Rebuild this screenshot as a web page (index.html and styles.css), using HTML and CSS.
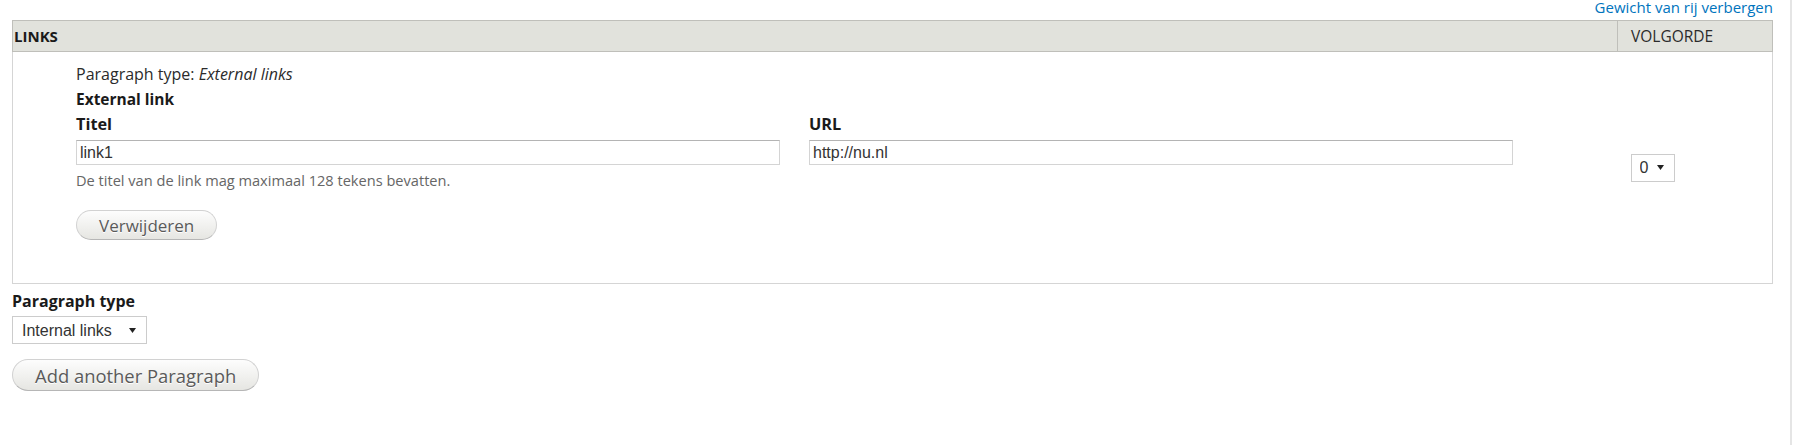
FILE: index.html
```html
<!DOCTYPE html>
<html lang="nl">
<head>
<meta charset="UTF-8">
<meta name="viewport" content="width=device-width, initial-scale=1.0">
<title>Links</title>
<link rel="stylesheet" href="styles.css">
</head>
<body>
<div class="page">
  <div class="table-tools">
    <a href="#" class="weight-toggle">Gewicht van rij verbergen</a>
  </div>
  <table class="field-table">
    <thead>
      <tr>
        <th class="field-label">Links</th>
        <th class="weight-col">Volgorde</th>
      </tr>
    </thead>
    <tbody>
      <tr>
        <td class="item">
          <div class="paragraph-type">Paragraph type: <em>External links</em></div>
          <div class="group-title">External link</div>
          <div class="link-fields">
            <div class="form-item">
              <label class="form-label" for="linkTitle">Titel</label>
              <input class="form-text" type="text" id="linkTitle" value="link1">
              <div class="description">De titel van de link mag maximaal 128 tekens bevatten.</div>
            </div>
            <div class="form-item">
              <label class="form-label" for="linkUrl">URL</label>
              <input class="form-text" type="text" id="linkUrl" value="http://nu.nl">
            </div>
          </div>
          <button class="button button-small" type="button">Verwijderen</button>
        </td>
        <td class="weight">
          <div class="select-box weight-select">
            <select id="weight">
              <option selected>0</option>
              <option>1</option>
            </select>
            <svg class="caret" width="7" height="5" viewBox="0 0 7 5"><path d="M0 0h7L3.5 5z"/></svg>
          </div>
        </td>
      </tr>
    </tbody>
  </table>

  <div class="add-more">
    <label class="form-label add-label" for="paragraphType">Paragraph type</label>
    <div class="select-box type-select">
      <select id="paragraphType">
        <option selected>Internal links</option>
        <option>External links</option>
      </select>
      <svg class="caret" width="7" height="5" viewBox="0 0 7 5"><path d="M0 0h7L3.5 5z"/></svg>
    </div>
    <button class="button button-add" type="button">Add another Paragraph</button>
  </div>
</div>
</body>
</html>
```

FILE: styles.css
```css
body {
  margin: 0;
  font-family: "Open Sans", Arial, sans-serif;
  color: #333;
  background: #fff;
}
.page {
  box-sizing: border-box;
  width: 1792px;
  min-height: 445px;
  padding: 0 17px 0 12px;
  border-right: 2px solid #e5e5e5;
}

/* tabledrag toggle */
.table-tools {
  height: 20px;
  text-align: right;
  font-size: 15px;
  line-height: 14px;
}
.weight-toggle {
  color: #0074bd;
  text-decoration: none;
}

.field-table {
  width: 100%;
  border-collapse: collapse;
}
.field-table th {
  padding: 5px 13px;
  line-height: 20px;
  font-size: 15.5px;
  font-weight: normal;
  text-align: left;
  text-transform: uppercase;
  color: #2b2b2b;
  background: #e1e2dc;
  border: 1px solid #bfbfba;
}
.field-table th.field-label {
  padding-left: 1px;
  font-size: 15px;
  font-weight: bold;
  color: #1a1a1a;
}
.field-table th.weight-col {
  width: 128px;
}
.field-table td {
  border: 1px solid #d5d5d5;
  vertical-align: middle;
}
.field-table td.item {
  padding: 10px 0 43px 63px;
  border-right: none;
  vertical-align: top;
}
.field-table td.weight {
  padding: 0 12px 0 13px;
  border-left: none;
}

.paragraph-type {
  font-size: 16px;
  line-height: 25px;
  color: #2b2b2b;
}
.group-title,
.form-label {
  display: block;
  font-size: 15.5px;
  font-weight: bold;
  line-height: 25px;
  color: #1a1a1a;
}
.form-item .form-label {
  margin-bottom: 3px;
  font-size: 16.3px;
}
.link-fields {
  display: flex;
  gap: 29px;
}
.form-text {
  display: block;
  box-sizing: border-box;
  width: 704px;
  height: 25px;
  margin: 0;
  padding: 0 3px;
  font: 16px "Liberation Sans", Arial, sans-serif;
  color: #333;
  border: 1px solid #d4d4d4;
  border-top-color: #b4b4b4;
}
.description {
  margin-top: 5px;
  font-size: 14.6px;
  line-height: 20px;
  color: #666;
}

.button {
  display: block;
  box-sizing: border-box;
  font-family: "Open Sans", Arial, sans-serif;
  color: #5a5a5a;
  text-shadow: 0 1px #fff;
  background: linear-gradient(#fdfdfd, #e6e6e2);
  border: 1px solid #d2d2d2;
  border-bottom-color: #b6b6b6;
  border-radius: 20px;
  cursor: pointer;
}
.button-small {
  height: 30px;
  margin-top: 20px;
  padding: 0 22px;
  font-size: 17px;
}
.button-add {
  height: 32px;
  margin-top: 15px;
  padding: 0 22px;
  font-size: 18.4px;
}

/* selects with a drawn caret */
.select-box {
  display: flex;
  align-items: center;
  box-sizing: border-box;
  height: 28px;
  padding-right: 10px;
  background: #fff;
  border: 1px solid #ccc;
}
.select-box select {
  flex: 1;
  min-width: 0;
  height: 100%;
  padding: 0 0 0 8px;
  font: 16px "Liberation Sans", Arial, sans-serif;
  color: #333;
  background: transparent;
  border: 0;
  outline: 0;
  appearance: none;
  -webkit-appearance: none;
}
.caret {
  flex: none;
  fill: #222;
}
.weight-select {
  width: 44px;
}
.type-select {
  width: 135px;
}
.type-select select {
  padding-left: 9px;
}

.add-more .add-label {
  margin: 5px 0 2px;
  font-size: 16px;
}
```
